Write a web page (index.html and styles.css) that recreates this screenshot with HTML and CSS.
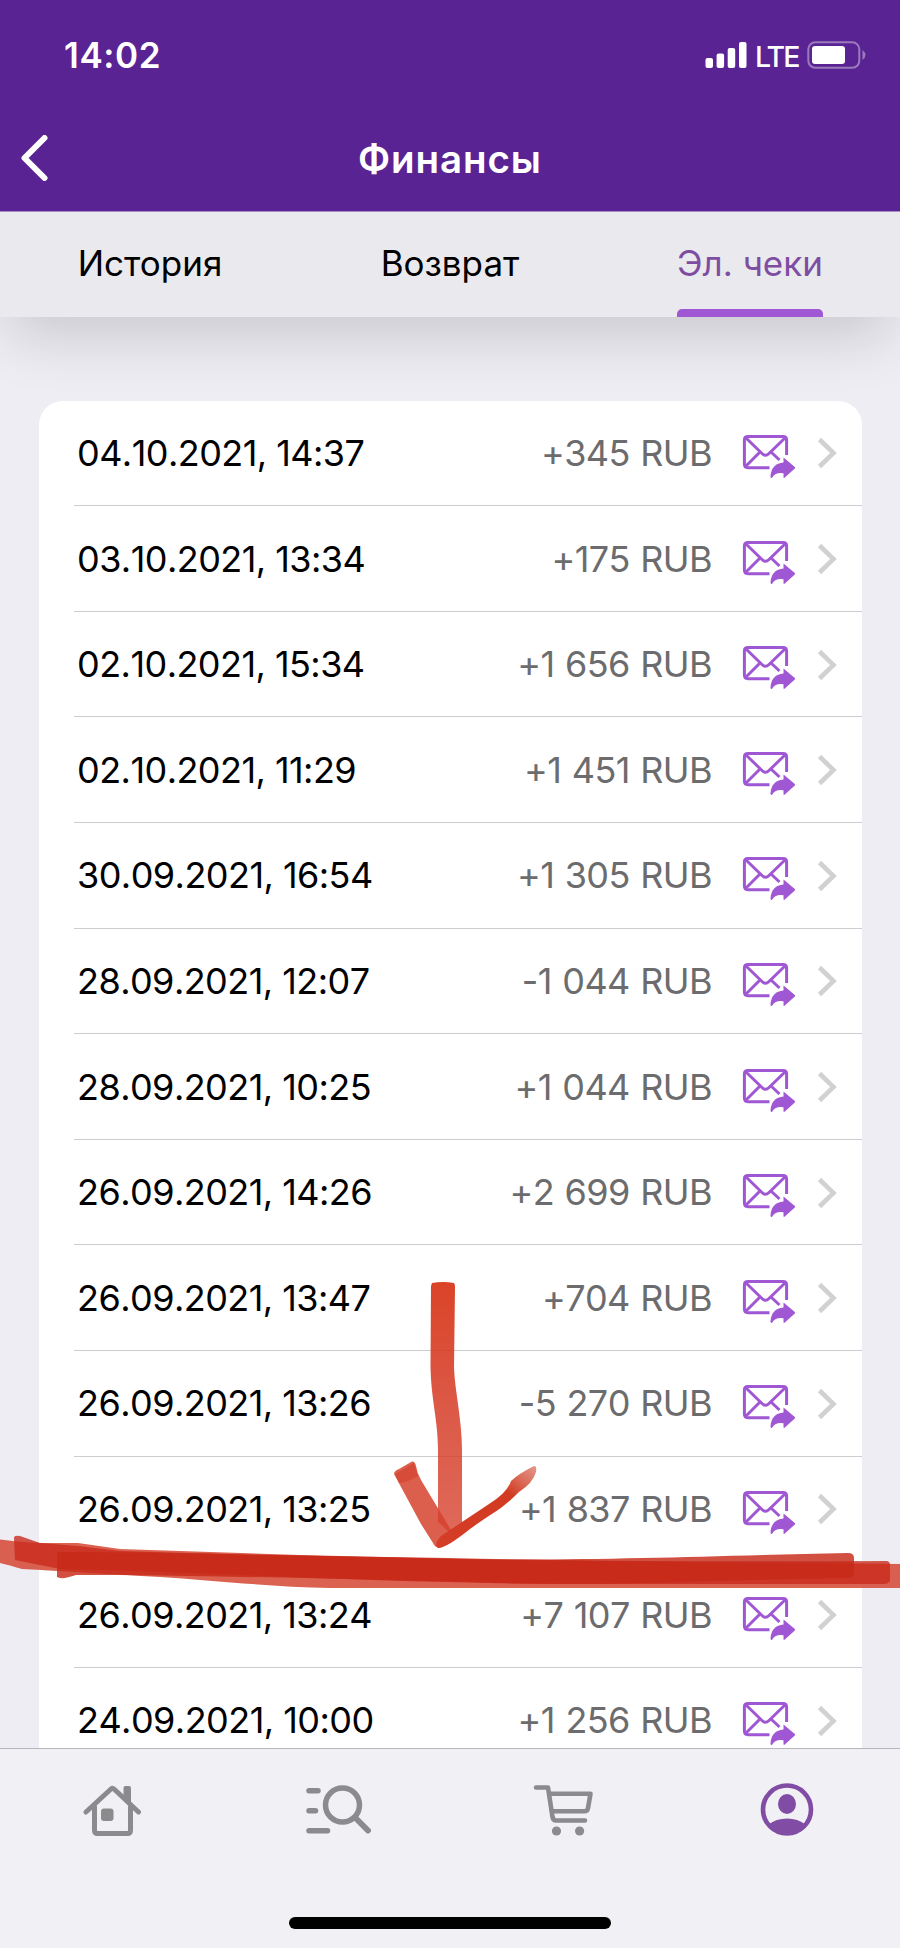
FILE: index.html
```html
<!DOCTYPE html>
<html lang="ru">
<head>
<meta charset="utf-8">
<title>Финансы</title>
<link rel="stylesheet" href="styles.css">
</head>
<body>
<svg class="sprite" width="0" height="0">
  <symbol id="mail" viewBox="0 0 54 46">
    <g fill="none" stroke="#a057d4" stroke-width="3" stroke-linejoin="round">
      <path d="M27.5 33.7H6Q2.4 33.7 2.4 30V6Q2.4 2.4 6 2.4H41Q44.6 2.4 44.6 6V21"/>
      <path d="M3.5 3.5L20 19.5Q23.5 23 27 19.5L43.5 3.5"/>
      <path d="M3.5 32.5L17.5 18.5M29.5 18.5L37.5 26"/>
    </g>
    <path d="M41.5 23.5L52.8 33Q53.5 33.7 52.8 34.4L42.5 43.8Q41.5 44.2 41.5 43V39.3Q33 38 30 44Q28.4 44.5 28.5 42Q29.500 29.500 41.500 28.500Z" fill="#a057d4"/>
  </symbol>
  <symbol id="chevron" viewBox="0 0 22 34"><path d="M2.500 3.500L16.500 17L2.500 30.500" fill="none" stroke="#d1d1d3" stroke-width="4.600"/></symbol>
</svg>
<div class="screen">
  <header class="header">
    <div class="status">
      <span class="time">14:02</span>
      <span class="signals">
        <svg width="42" height="28" viewBox="0 0 42 28" fill="#fff"><rect x="0.500" y="17" width="7.500" height="10" rx="2"/><rect x="11.600" y="12.500" width="7.500" height="14.500" rx="2"/><rect x="22.700" y="7" width="7.500" height="20" rx="2"/><rect x="34" y="1" width="7.500" height="26" rx="2"/></svg>
        <span class="lte">LTE</span>
        <svg width="60" height="28" viewBox="0 0 60 28"><rect x="1.300" y="1.300" width="51" height="25.500" rx="7" fill="none" stroke="#9b7bbd" stroke-width="2"/><rect x="5" y="5" width="33" height="18" rx="3" fill="#fff"/><path d="M55.500 9Q61.500 14 55.500 19Z" fill="#9b7bbd"/></svg>
      </span>
    </div>
    <div class="nav">
      <svg class="back" width="28" height="46" viewBox="0 0 28 46"><path d="M24.500 3L4.500 23L24.500 43" fill="none" stroke="#fff" stroke-width="6" stroke-linecap="round" stroke-linejoin="round"/></svg>
      <h1 class="title">Финансы</h1>
    </div>
  </header>
  <nav class="tabs">
    <div class="tab"><span class="tab-label">История</span></div>
    <div class="tab"><span class="tab-label">Возврат</span></div>
    <div class="tab"><span class="tab-label active">Эл. чеки</span></div>
  </nav>
  <main class="content">
    <ul class="card">
      <li class="row"><span class="date">04.10.2021, 14:37</span><span class="sum">+345 RUB</span><svg class="mail"><use href="#mail"/></svg><svg class="chev"><use href="#chevron"/></svg></li>
      <li class="row"><span class="date">03.10.2021, 13:34</span><span class="sum">+175 RUB</span><svg class="mail"><use href="#mail"/></svg><svg class="chev"><use href="#chevron"/></svg></li>
      <li class="row"><span class="date">02.10.2021, 15:34</span><span class="sum">+1 656 RUB</span><svg class="mail"><use href="#mail"/></svg><svg class="chev"><use href="#chevron"/></svg></li>
      <li class="row"><span class="date">02.10.2021, 11:29</span><span class="sum">+1 451 RUB</span><svg class="mail"><use href="#mail"/></svg><svg class="chev"><use href="#chevron"/></svg></li>
      <li class="row"><span class="date">30.09.2021, 16:54</span><span class="sum">+1 305 RUB</span><svg class="mail"><use href="#mail"/></svg><svg class="chev"><use href="#chevron"/></svg></li>
      <li class="row"><span class="date">28.09.2021, 12:07</span><span class="sum">-1 044 RUB</span><svg class="mail"><use href="#mail"/></svg><svg class="chev"><use href="#chevron"/></svg></li>
      <li class="row"><span class="date">28.09.2021, 10:25</span><span class="sum">+1 044 RUB</span><svg class="mail"><use href="#mail"/></svg><svg class="chev"><use href="#chevron"/></svg></li>
      <li class="row"><span class="date">26.09.2021, 14:26</span><span class="sum">+2 699 RUB</span><svg class="mail"><use href="#mail"/></svg><svg class="chev"><use href="#chevron"/></svg></li>
      <li class="row"><span class="date">26.09.2021, 13:47</span><span class="sum">+704 RUB</span><svg class="mail"><use href="#mail"/></svg><svg class="chev"><use href="#chevron"/></svg></li>
      <li class="row"><span class="date">26.09.2021, 13:26</span><span class="sum">-5 270 RUB</span><svg class="mail"><use href="#mail"/></svg><svg class="chev"><use href="#chevron"/></svg></li>
      <li class="row"><span class="date">26.09.2021, 13:25</span><span class="sum">+1 837 RUB</span><svg class="mail"><use href="#mail"/></svg><svg class="chev"><use href="#chevron"/></svg></li>
      <li class="row"><span class="date">26.09.2021, 13:24</span><span class="sum">+7 107 RUB</span><svg class="mail"><use href="#mail"/></svg><svg class="chev"><use href="#chevron"/></svg></li>
      <li class="row"><span class="date">24.09.2021, 10:00</span><span class="sum">+1 256 RUB</span><svg class="mail"><use href="#mail"/></svg><svg class="chev"><use href="#chevron"/></svg></li>
    </ul>
  </main>
  <footer class="bottom">
    <div class="icons">
      <svg width="60" height="56" viewBox="-1.500 0 60 56" fill="none" stroke="#8b8b8e" stroke-width="5" stroke-linecap="round" stroke-linejoin="round"><path d="M1.500 30L26.500 7Q28 5.600 29.500 7L54 30"/><path d="M10 25V48Q10 51.500 13 51.500H43Q46 51.500 46 48V25"/><path d="M39 6Q39 4 41 4H44.500Q46.500 4 46.500 6V24L39 17Z" fill="#8b8b8e" stroke="none"/><rect x="16.500" y="26.500" width="12.500" height="12.500" rx="3" fill="#8b8b8e" stroke="none"/></svg>
      <svg width="68" height="56" viewBox="0 0 68 56" fill="none" stroke="#8b8b8e" stroke-width="5.500" stroke-linecap="round"><path d="M5 8.700H14M5 28.700H11.500M5 48.700H23.500"/><circle cx="38.500" cy="23" r="17"/><path d="M51.500 36L64 48.500" stroke-width="6"/></svg>
      <svg width="60" height="56" viewBox="0 0 60 56" fill="none" stroke="#8b8b8e" stroke-width="4.600" stroke-linecap="round" stroke-linejoin="round"><path d="M3 5.500H15L19.500 35Q20.200 38.500 23 38.500H52"/><path d="M16.500 11.700H57.500L55 26Q54.500 29.300 51.500 29.300H19"/><circle cx="23.500" cy="49" r="4.600" fill="#8b8b8e" stroke="none"/><circle cx="46.600" cy="49" r="4.600" fill="#8b8b8e" stroke="none"/></svg>
      <svg width="56" height="56" viewBox="0 0 56 56"><circle cx="27" cy="27.500" r="24" fill="none" stroke="#814da4" stroke-width="4.600"/><ellipse cx="27" cy="22" rx="9" ry="10" fill="#814da4"/><path d="M8.500 42.500Q16 36.500 27 36.500Q38 36.500 45.500 42.500Q38 51.500 27 51.500Q16 51.500 8.500 42.500Z" fill="#814da4"/></svg>
    </div>
    <div class="home-bar"></div>
  </footer>
  <svg class="marker" width="900" height="1948" viewBox="0 0 900 1948">
    <defs>
      <linearGradient id="shaft" x1="0" y1="0" x2="0" y2="1"><stop offset="0" stop-color="#d73517" stop-opacity=".93"/><stop offset=".5" stop-color="#d63e28" stop-opacity=".86"/><stop offset="1" stop-color="#d63e2b" stop-opacity=".78"/></linearGradient>
      <linearGradient id="arm" x1="1" y1="0" x2="0" y2="1"><stop offset="0" stop-color="#d86b58" stop-opacity=".7"/><stop offset=".3" stop-color="#d23b22"/><stop offset="1" stop-color="#d53d26"/></linearGradient>
    </defs>
    <path d="M432 1283Q443 1281 454 1283Q455 1284 455 1287L454 1368C455 1392 462 1420 462 1450V1523L449 1532L438 1522V1450C438 1420 431 1400 430.500 1366L431 1286Z" fill="url(#shaft)"/>
    <path d="M394 1474Q394 1471 399 1469L412 1461.500Q415 1461 416 1466Q417 1473 421 1480L451 1530L439 1547Q435 1548 433 1543L421 1524Z" fill="#d5402b" fill-opacity=".84"/>
    <path d="M395 1474L414 1463L418 1476Q406 1483 399 1483Z" fill="#cf3019" fill-opacity=".4"/>
    <path d="M534 1466Q537 1466 536 1472Q533 1483 519 1492C500 1511 490 1514 470 1529Q445 1549 438 1548Q433 1545 441 1536L489 1504Q507 1493 511 1481Q518 1474 534 1466Z" fill="url(#arm)"/>
    <path d="M0 1539.500C12 1541 20 1542 40 1543L78 1543L120 1549L300 1555L500 1560L900 1564V1588H330C270 1587 210 1580 160 1577C110 1574 60 1571 22 1569Q9 1565 0 1563Z" fill="#d44430" fill-opacity=".84"/>
    <path d="M14 1538Q14 1535 20 1536L40 1543L78 1546L120 1551L260 1555L450 1558C620 1562 760 1562 886 1561Q890 1561 890 1565V1580Q890 1584 883 1584H560C380 1583 180 1571 60 1569L15 1560Z" fill="#c92a1b" fill-opacity=".8"/>
    <path d="M57 1552C180 1552 300 1556 450 1559C600 1561 700 1556 848 1553Q854 1553 854 1558V1574Q854 1577 848 1578C700 1580 620 1586 500 1583C350 1579 190 1575 76 1575Q62 1580 57 1577Z" fill="#c72918" fill-opacity=".82"/>
  </svg>
</div>
</body>
</html>
```
FILE: styles.css
```css
* { box-sizing: border-box; }
body { margin: 0; font-family: Inter, "Noto Sans", sans-serif; }
.sprite { position: absolute; }
.screen { position: relative; width: 900px; height: 1948px; overflow: hidden; display: flex; flex-direction: column; background: #eeedf4; }
.header { z-index: 1; height: 212px; flex: none; background: #5a2393; border-bottom: 1px solid #a98bc8; color: #fff; }
.status { height: 110px; display: flex; justify-content: space-between; align-items: center; padding: 0 33px 0 64px; }
.time { font-size: 35px; font-weight: 600; letter-spacing: 0.6px; }
.signals { display: flex; align-items: center; }
.lte { font-size: 28.5px; font-weight: 500; width: 43px; margin: 2px 9px 0 8px; letter-spacing: -1.9px; }
.nav { height: 96px; display: grid; grid-template-columns: 60px 1fr 60px; align-items: center; padding: 0 20px; }
.title { margin: 1px 0 0; font-size: 38.5px; font-weight: 600; letter-spacing: 0.9px; text-align: center; }
.tabs { z-index: 0; height: 105px; flex: none; display: grid; grid-template-columns: repeat(3, 1fr); background: #eaeaee; box-shadow: 0 28px 60px -10px rgba(0, 0, 0, 0.16); font-size: 35px; }
.tab { display: flex; justify-content: center; }
.tab-label { display: flex; align-items: center; padding-top: 5px; border-bottom: 8px solid transparent; position: relative; }
.tab-label.active { color: #7e4da2; }
.tab-label.active::after { content: ""; position: absolute; left: 0; right: 0; bottom: -8px; height: 8px; border-radius: 5px 5px 0 0; background: #a057d4; }
.content { flex: 1; min-height: 0; overflow: hidden; padding: 83.700px 38px 0 38.500px; z-index: 0; }
.card { margin: 0; padding: 0 0 0 35.500px; list-style: none; background: #fff; border-radius: 24px 24px 0 0; }
.row { height: 105.600px; display: flex; align-items: center; padding: 0 23px 0 3px; border-bottom: 1.300px solid #cdcdcf; font-size: 36px; font-kerning: none; white-space: nowrap; }
.date { flex: 1; color: #000; letter-spacing: -0.55px; }
.sum { color: #6c6c6e; letter-spacing: -0.6px; word-spacing: 1px; }
.mail { width: 54px; height: 46px; margin: 8px 0 0 30px; }
.chev { width: 22px; height: 34px; margin: 1px 0 0 21px; }
.bottom { z-index: 1; height: 200px; flex: none; border-top: 1px solid #b6b6bb; background: #f1f0f5; display: flex; flex-direction: column; align-items: center; }
.icons { width: 100%; height: 168px; display: grid; grid-template-columns: repeat(4, 1fr); padding-top: 33px; justify-items: center; align-items: start; }
.home-bar { width: 322px; height: 12px; border-radius: 6px; background: #000; }
.marker { position: absolute; left: 0; top: 0; z-index: 3; }
```
